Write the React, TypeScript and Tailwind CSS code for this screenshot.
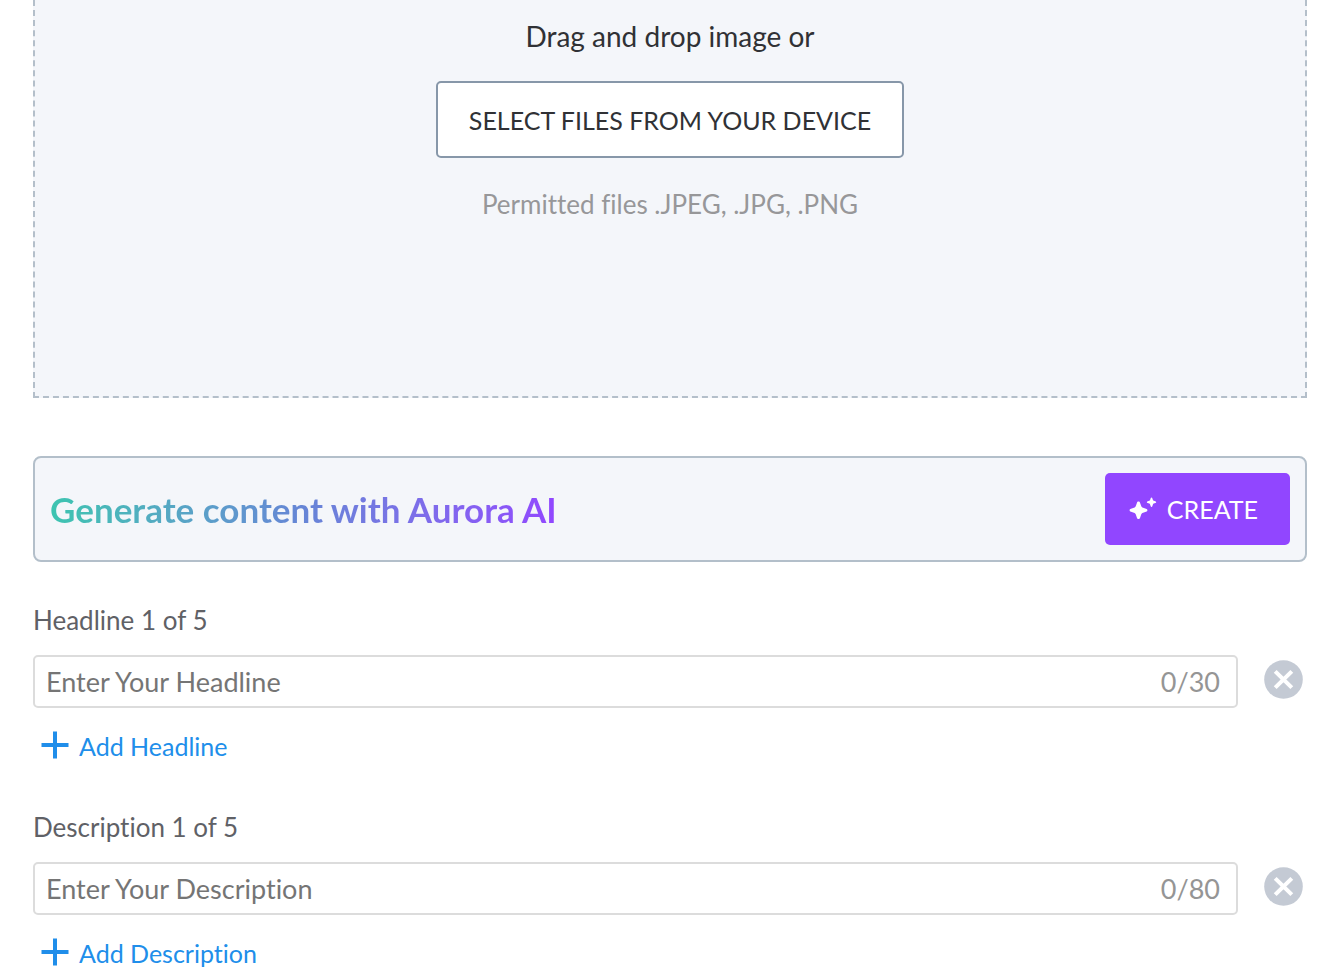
import { useState } from "react";

type TextFieldProps = {
  name: string;
  limit: number;
};

function PlusIcon() {
  return (
    <svg width="28" height="28" viewBox="0 0 28 28" aria-hidden="true">
      <path d="M14 0.5V27.5M0.5 14H27.5" stroke="currentColor" strokeWidth="4" fill="none" />
    </svg>
  );
}

function CloseCircleIcon() {
  return (
    <svg width="39" height="39" viewBox="0 0 39 39" aria-hidden="true">
      <circle cx="19.5" cy="19.5" r="19.3" fill="#c4cad4" />
      <path d="M11.2 11.4L27.8 27.6M27.8 11.4L11.2 27.6" stroke="#fff" strokeWidth="4.1" fill="none" />
    </svg>
  );
}

function SparklesIcon() {
  return (
    <svg width="28" height="24" viewBox="0 0 28 24" fill="#fff" aria-hidden="true">
      <path d="M9.5 4.5c.8 0 1.300.500 1.600 1.400l1 2.900c.4 1.100.9 1.600 2 2l2.900 1c.9.300 1.400.800 1.400 1.500s-.5 1.200-1.400 1.500l-2.900 1c-1.100.4-1.600.9-2 2l-1 2.900c-.3.900-.8 1.400-1.600 1.400s-1.300-.5-1.600-1.400l-1-2.900c-.4-1.100-.9-1.600-2-2l-2.900-1C1.100 14.500.6 14 .6 13.300s.5-1.200 1.400-1.500l2.900-1c1.100-.4 1.600-.9 2-2l1-2.900c.3-.9.800-1.400 1.600-1.400z" />
      <path d="M22.500.500c.4 0 .7.300.900.900l.5 1.500c.2.500.4.700.9.900l1.500.5c.6.200.9.500.9.900s-.3.700-.9.900l-1.500.5c-.5.200-.7.400-.9.900l-.5 1.500c-.2.600-.5.900-.9.900s-.7-.3-.9-.9l-.5-1.500c-.2-.5-.4-.7-.9-.9l-1.500-.5c-.6-.2-.9-.5-.9-.9s.3-.7.900-.9l1.500-.5c.5-.2.700-.4.900-.9l.5-1.500c.2-.6.5-.9.900-.9z" />
    </svg>
  );
}

function TextField({ name, limit }: TextFieldProps) {
  const [value, setValue] = useState("");
  const id = name.toLowerCase();

  return (
    <section>
      <label htmlFor={id} className="block text-[26px] leading-9 text-[#5f6166]">
        {name} 1 of 5
      </label>
      <div className="mt-[17px] flex items-center">
        <div className="flex h-[53px] min-w-0 flex-1 items-center rounded-[5px] border-2 border-[#dcdcdc] bg-white pr-4 pl-[11px]">
          <input
            id={id}
            type="text"
            maxLength={limit}
            value={value}
            onChange={(event) => setValue(event.target.value)}
            placeholder={`Enter Your ${name}`}
            className="min-w-0 flex-1 bg-transparent text-[27px] leading-9 text-[#333] outline-none placeholder:text-[#757575]"
          />
          <span className="text-[27px] leading-9 text-[#959595]">
            {value.length}/{limit}
          </span>
        </div>
        <button
          type="button"
          aria-label={`Remove ${name.toLowerCase()}`}
          onClick={() => setValue("")}
          className="mr-1 mb-1 ml-[26px]"
        >
          <CloseCircleIcon />
        </button>
      </div>
      <button
        type="button"
        className="mt-[19px] ml-2 flex h-9 items-center gap-[10px] text-[25px] leading-9 text-[#208eea]"
      >
        <PlusIcon />
        <span className="pt-[2px]">Add {name}</span>
      </button>
    </section>
  );
}

export default function App() {
  return (
    <main className="bg-white px-[33px] font-['Lato',sans-serif] [font-variant-ligatures:none]">
      <div className="flex flex-col items-center border-2 border-t-0 border-dashed border-[#b4bfca] bg-[#f4f6fa] pt-[18px] pb-[174px] text-[27px] leading-9">
        <p className="text-[28px] text-[#303135]">Drag and drop image or</p>
        <button
          type="button"
          className="mt-[27px] h-[77px] rounded-[5px] border-2 border-[#8797a9] bg-white px-[31px] text-[25px] text-[#303135]"
        >
          SELECT FILES FROM YOUR DEVICE
        </button>
        <p className="mt-7 text-[26px] text-[#979799]">Permitted files .JPEG, .JPG, .PNG</p>
      </div>

      <div className="mt-[58px] flex items-center justify-between rounded-lg border-2 border-[#b3bfca] bg-[#f4f6fa] p-[15px]">
        <h2 className="bg-linear-to-r from-[#3cc4b0] via-[#6685d6] to-[#9146ff] bg-clip-text text-[35px] leading-[48px] font-bold text-transparent">
          Generate content with Aurora AI
        </h2>
        <button
          type="button"
          className="flex h-[72px] items-center gap-[10px] rounded-[5px] bg-[#9146ff] pr-8 pl-6 text-[25px] leading-9 text-white"
        >
          <SparklesIcon />
          CREATE
        </button>
      </div>

      <div className="mt-10 flex flex-col gap-[46px] pb-2">
        <TextField name="Headline" limit={30} />
        <TextField name="Description" limit={80} />
      </div>
    </main>
  );
}
